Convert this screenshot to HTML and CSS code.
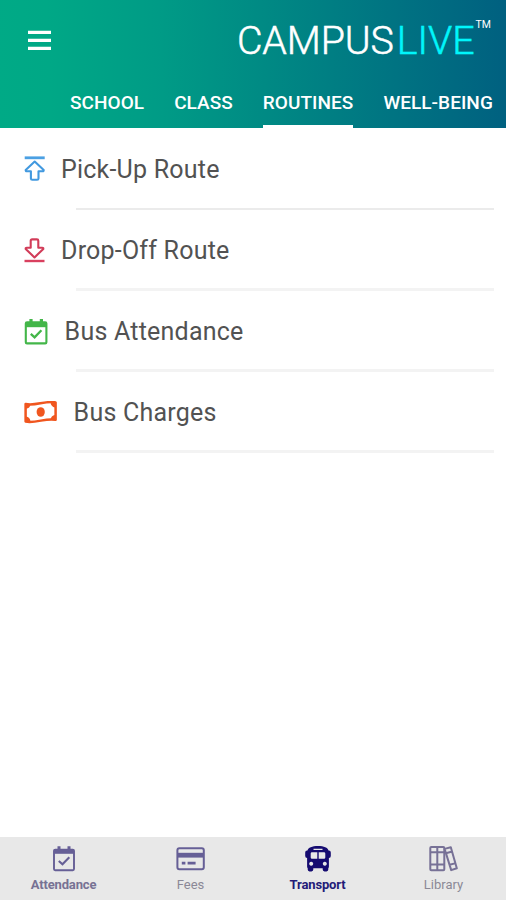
FILE: index.html
```html
<!DOCTYPE html>
<html lang="en">
<head>
<meta charset="utf-8">
<title>CampusLive</title>
<link rel="stylesheet" href="styles.css">
</head>
<body>
<div class="app">
  <header class="header">
    <div class="topbar">
      <svg class="menu" width="23" height="21" viewBox="0 0 23 21"><path d="M0 2.4h23M0 10.4h23M0 18.3h23" stroke="#fff" stroke-width="3.2"/></svg>
      <div class="brand"><span class="campus">CAMPUS</span><span class="live">LIVE</span><span class="tm">TM</span></div>
    </div>
    <nav class="tabs">
      <span class="tab">SCHOOL</span>
      <span class="tab">CLASS</span>
      <span class="tab active">ROUTINES</span>
      <span class="tab">WELL-BEING</span>
    </nav>
  </header>
  <main class="list">
    <div class="row">
      <svg class="icon pickup" width="22" height="26" viewBox="0 0 22 26"><path d="M.7 1.8h20" stroke="#4ba0e3" stroke-width="2.8"/><path d="M10.7 5.6L1.7 14Q1.5 15.4 2.9 15.3H6.9V22.4q0 1.4 1.4 1.4h4.8q1.4 0 1.4-1.4V15.3h4Q19.9 15.4 19.7 14Z" fill="none" stroke="#4299df" stroke-width="2.1" stroke-linejoin="round"/></svg>
      <span class="label">Pick-Up Route</span>
    </div>
    <div class="row">
      <svg class="icon drop" width="22" height="26" viewBox="0 0 22 26"><path d="M.5 23h20" stroke="#d9405f" stroke-width="2.4"/><path d="M10.5 19.4L1.7 11Q1.5 9.6 2.9 9.7H6.7V2.8q0-1.4 1.4-1.4h4.8q1.4 0 1.4 1.4V9.7h3.8Q19.5 9.6 19.3 11Z" fill="none" stroke="#d23c59" stroke-width="2.1" stroke-linejoin="round"/></svg>
      <span class="label">Drop-Off Route</span>
    </div>
    <div class="row">
      <svg class="icon calendar" width="24" height="26" viewBox="0 0 24 26"><g fill="none" stroke="#43b649" stroke-width="2.1"><rect x="1.8" y="3.2" width="20.6" height="21.2" rx="1.2"/><path d="M2 5.7h20.4" stroke-width="5"/><path d="M7 0v4M17.4 0v4" stroke-width="3.2"/><path d="M6.8 14.8l3.8 3.6 6.8-7.2" stroke-width="2.3"/></g></svg>
      <span class="label">Bus Attendance</span>
    </div>
    <div class="row">
      <svg class="icon cash" width="33" height="23" viewBox="0 0 33 23"><path d="M1.6 3C11 5.4 21-.6 31.6 1.4V18.8C22 16.6 12 22.6 1.6 20.6Z" fill="none" stroke="#f0561f" stroke-width="2.5" stroke-linejoin="round"/><path d="M2 3h4.5Q6 7.4 2 7.8ZM31 1.4h-4.5Q27 5.6 31 6.4ZM2 20.4h4.5Q6 15.9 2 15.4ZM31 18.8h-4.5Q27 14.4 31 13.9Z" fill="#f0561f"/><ellipse cx="16.7" cy="11" rx="4.1" ry="4.8" fill="#f0561f"/></svg>
      <span class="label">Bus Charges</span>
    </div>
  </main>
  <nav class="bottom">
    <div class="item strong">
      <svg width="24" height="26" viewBox="0 0 24 26"><g fill="none" stroke="#665f96" stroke-width="1.9"><rect x="2" y="3.6" width="20" height="20.7" rx="1.2"/><path d="M2 5.8h20" stroke-width="4"/><path d="M7 .2v4M17 .2v4" stroke-width="3"/><path d="M6.8 14.9l3.7 3.4 6.8-7" stroke-width="2.1"/></g></svg>
      <span>Attendance</span>
    </div>
    <div class="item">
      <svg width="30" height="26" viewBox="0 0 30 26"><g fill="none" stroke="#665f96" stroke-width="2"><rect x="1.4" y="2.2" width="26.4" height="21" rx="2"/><path d="M1.6 9.2h26" stroke-width="4.8"/><path d="M5.8 17.2h3.6M11.6 17.2h8" stroke-width="2.8"/></g></svg>
      <span>Fees</span>
    </div>
    <div class="item current">
      <svg width="26" height="26" viewBox="0 0 26 26"><path fill="#150b70" fill-rule="evenodd" d="M13 .1C19 .1 22.8 1.7 23.5 4.6h.4q1.9 0 1.9 1.9v3.6q0 1.9-1.9 1.9v8.5q0 1.3-.6 1.7v1.4q0 1.8-1.8 1.8h-2q-1.8 0-1.8-1.8v-1.4H8.3v1.4q0 1.8-1.8 1.8h-2q-1.8 0-1.8-1.8v-1.4q-.6-.4-.6-1.7V12Q.2 12 .2 10.1V6.5Q.2 4.6 2.1 4.6h.4C3.2 1.7 7 .1 13 .1ZM8.5 2.7v1.3h9V2.7ZM7 6.2q-1.3 0-1.3 1.3v4q0 1.3 1.3 1.3h5.3V6.2Zm6.7 0v6.6H19q1.3 0 1.3-1.3v-4q0-1.3-1.3-1.3ZM6.2 15.8a2 2 0 1 0 .01 0ZM19.8 15.8a2 2 0 1 0 .01 0Z"/></svg>
      <span>Transport</span>
    </div>
    <div class="item">
      <svg width="30" height="26" viewBox="0 0 30 26"><g fill="none" stroke="#777196" stroke-width="2" stroke-linejoin="round"><rect x="1.3" y="1.1" width="14" height="23.2" rx="1"/><path d="M8.3 1.1v23.2M1.1 6.2H15.6M1.1 18.4H15.6"/><path d="M15.6 2.9l6.2-1.7 6 21.1-5.6 1.8ZM16.9 7.2l6.3-1.7M20.7 18.8l6.1-1.7"/></g></svg>
      <span>Library</span>
    </div>
  </nav>
</div>
</body>
</html>
```

FILE: styles.css
```css
* { box-sizing: border-box; }
body { margin: 0; font-family: Roboto, "Liberation Sans", sans-serif; background: #fff; }
.app { width: 506px; height: 900px; display: flex; flex-direction: column; overflow: hidden; }
.header { height: 128px; flex: none; background: linear-gradient(88deg, #00aa86 0%, #00a886 10%, #009b86 32%, #008a84 52%, #007382 78%, #006080 100%); color: #fff; }
.topbar { height: 80px; display: flex; justify-content: space-between; padding: 0 15px 0 28px; }
.menu { margin-top: 30px; }
.brand { display: flex; font-size: 39.3px; line-height: 82px; font-weight: 300; white-space: nowrap; -webkit-text-stroke: .5px currentColor; }
.campus { letter-spacing: -.1px; }
.live { color: #00f6fb; margin-left: 3px; }
.tm { font-size: 10.5px; line-height: 49px; font-weight: 400; margin-left: 1px; -webkit-text-stroke: 0; }
.tabs { height: 48px; display: flex; gap: 30px; padding-left: 70px; white-space: nowrap; }
.tab { height: 48px; font-size: 19px; line-height: 46px; font-weight: 500; letter-spacing: .05px; border-bottom: 3px solid transparent; }
.tab.active { border-bottom-color: #fff; }
.list { flex: 1; }
.row { height: 81px; display: flex; align-items: center; padding-left: 24px; background: linear-gradient(#f3f3f3, #f3f3f3) 76px 100% / 418px 3px no-repeat; }
.row:first-child { height: 82px; background: linear-gradient(#ebebeb, #ebebeb) 76px 100% / 418px 2px no-repeat; }
.row .icon { flex: none; }
.label { font-size: 25px; line-height: 80px; color: #525252; margin-left: 15px; white-space: nowrap; letter-spacing: .22px; }
.row:first-child .label { padding-top: 1px; }
.calendar + .label, .cash + .label { margin-left: 16.6px; }
.bottom { height: 63px; flex: none; background: #e8e8e8; display: grid; grid-template-columns: 127px 127px 127px 125px; }
.item { display: flex; flex-direction: column; align-items: center; padding-top: 9px; color: #8b8896; font-size: 13px; line-height: 16px; }
.item svg { flex: none; margin-bottom: 5px; }
.strong { color: #777294; font-weight: 700; letter-spacing: -.15px; }
.current { color: #241b78; font-weight: 700; letter-spacing: -.15px; }
```
